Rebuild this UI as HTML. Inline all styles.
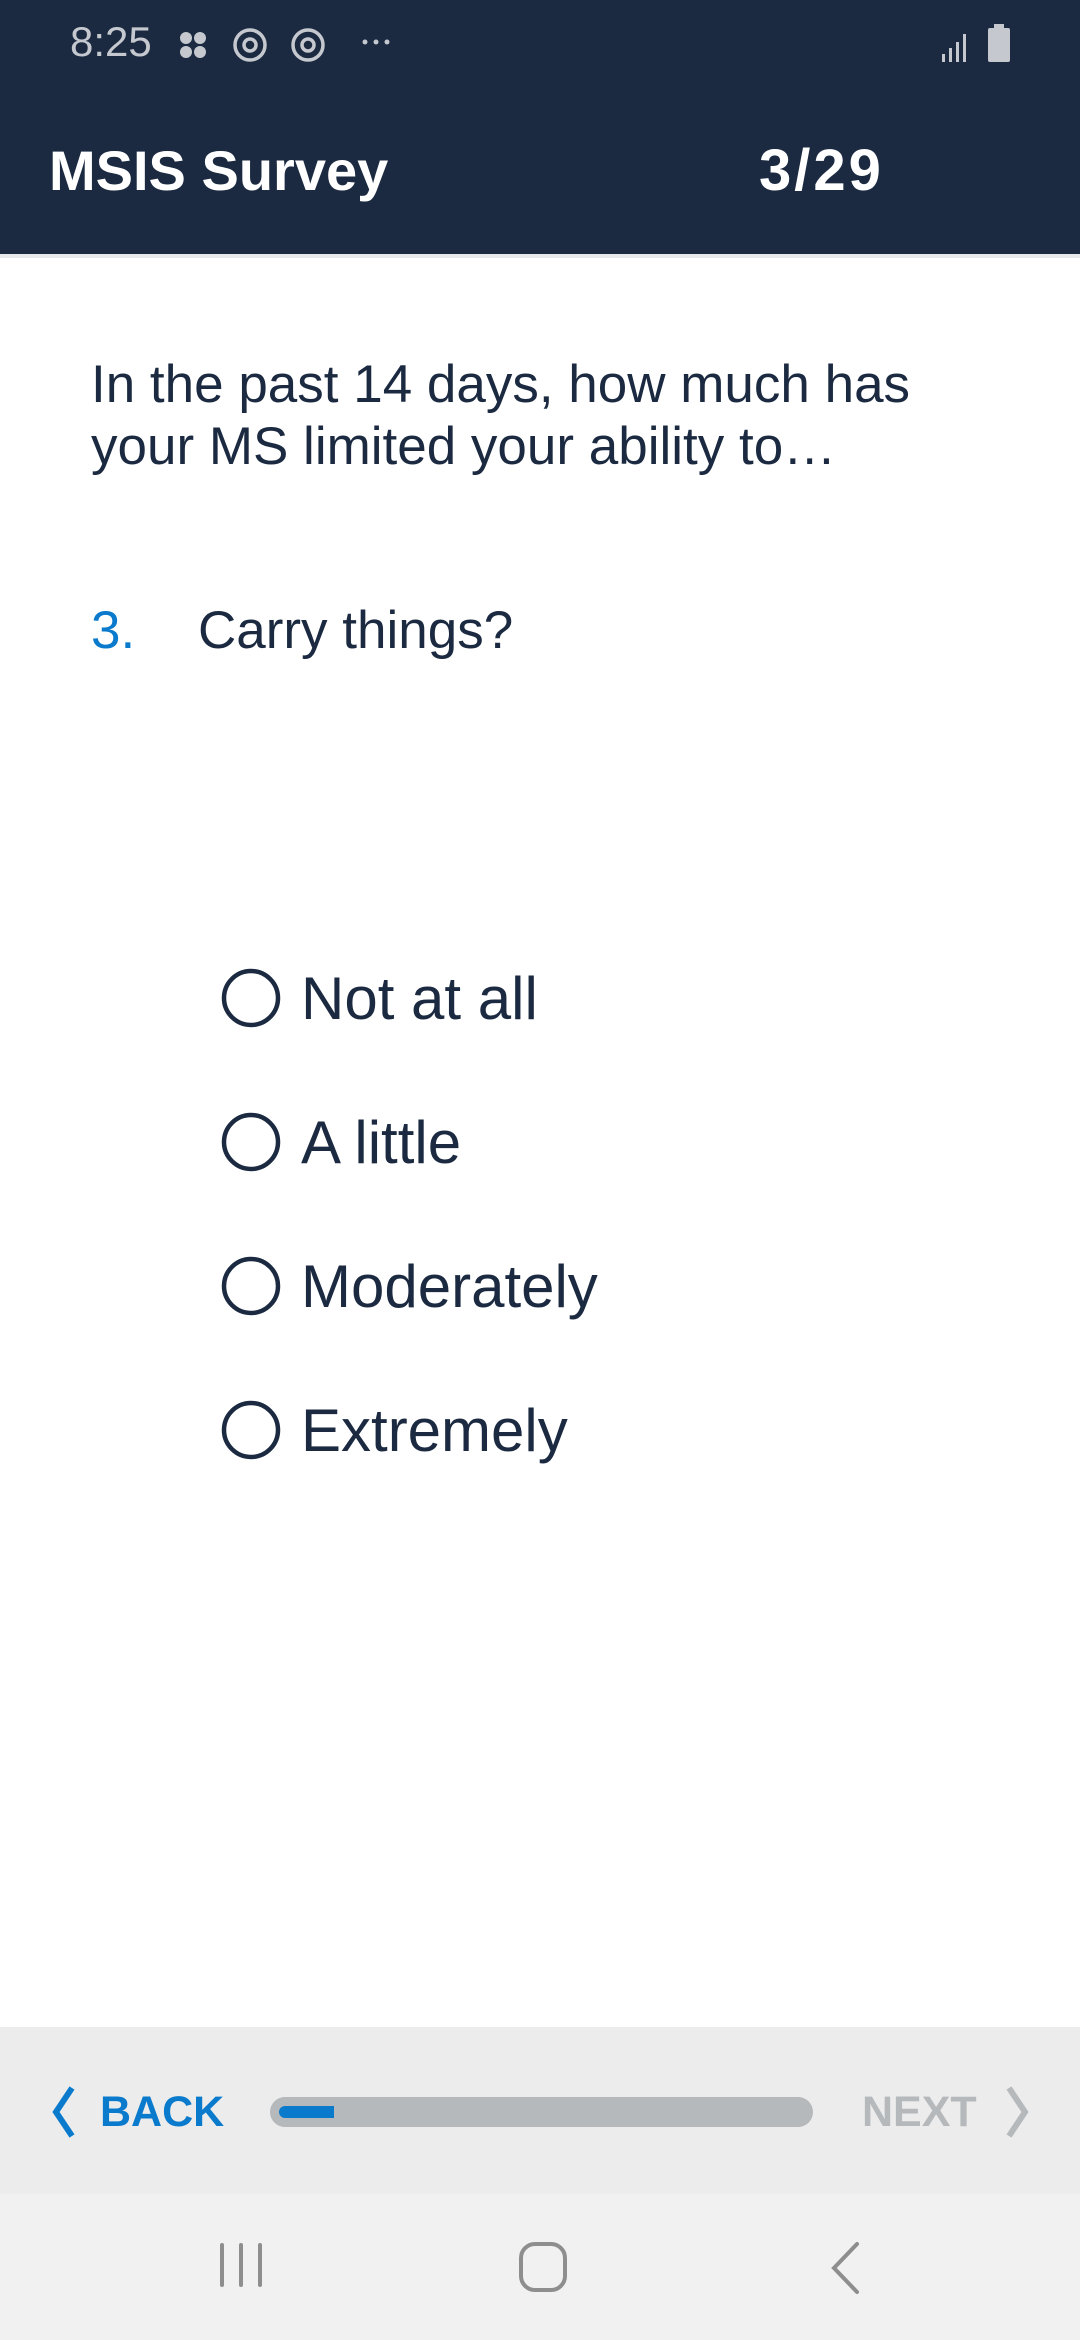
<!DOCTYPE html>
<html><head><meta charset="utf-8"><style>
*{margin:0;padding:0;box-sizing:border-box}
body{width:1080px;height:2340px;position:relative;background:#fff;font-family:"Liberation Sans",sans-serif;overflow:hidden;color:#1b2a41}
.abs{position:absolute}
</style></head><body>
<div class="abs" style="left:0;top:0;width:1080px;height:254px;background:#1b2a41"></div>
<div class="abs" style="left:0;top:254px;width:1080px;height:4px;background:#e6e8ea"></div>
<div class="abs" style="left:70px;top:20px;font-size:42px;color:#c5c9cf;line-height:44px">8:25</div>
<svg class="abs" style="left:176px;top:24px" width="240" height="40" viewBox="0 0 240 40">
<g fill="#c5c9cf"><circle cx="10" cy="14" r="6"/><circle cx="24" cy="14" r="6"/><circle cx="10" cy="28" r="6"/><circle cx="24" cy="28" r="6"/></g>
<g fill="none" stroke="#c5c9cf" stroke-width="3.5"><circle cx="74" cy="21" r="15"/><circle cx="74" cy="21" r="6"/><circle cx="132" cy="21" r="15"/><circle cx="132" cy="21" r="6"/></g>
<g fill="#c5c9cf"><circle cx="189" cy="18" r="2.5"/><circle cx="200" cy="18" r="2.5"/><circle cx="211" cy="18" r="2.5"/></g>
</svg>
<svg class="abs" style="left:938px;top:22px" width="80" height="40" viewBox="0 0 80 40">
<g fill="#c5c9cf"><rect x="4" y="32" width="3" height="8"/><rect x="11" y="26" width="3" height="14"/><rect x="18" y="20" width="3" height="20"/><rect x="25" y="12" width="3" height="28"/>
<rect x="50" y="6" width="22" height="34" rx="2"/><rect x="56" y="2" width="10" height="6"/></g></svg>
<div class="abs" style="left:49px;top:138px;font-size:56px;font-weight:bold;color:#fff;line-height:66px">MSIS Survey</div>
<div class="abs" style="left:759px;top:138px;font-size:58px;font-weight:bold;color:#fff;line-height:66px;letter-spacing:3px">3/29</div>

<div class="abs" style="left:91px;top:354px;font-size:53px;line-height:62px;width:980px;white-space:nowrap">In the past 14 days, how much has<br>your MS limited your ability to…</div>
<div class="abs" style="left:91px;top:600px;font-size:53px;line-height:62px;color:#0a7acc">3.</div>
<div class="abs" style="left:198px;top:600px;font-size:53px;line-height:62px">Carry things?</div>

<svg class="abs" style="left:0;top:940px" width="400" height="560">
<g fill="none" stroke="#1b2a41" stroke-width="4.5"><circle cx="251" cy="58" r="27"/><circle cx="251" cy="202" r="27"/><circle cx="251" cy="346" r="27"/><circle cx="251" cy="490" r="27"/></g></svg>
<div class="abs" style="left:301px;top:963px;font-size:60px;line-height:72px">Not at all</div>
<div class="abs" style="left:301px;top:1107px;font-size:60px;line-height:72px">A little</div>
<div class="abs" style="left:301px;top:1251px;font-size:60px;line-height:72px">Moderately</div>
<div class="abs" style="left:301px;top:1395px;font-size:60px;line-height:72px">Extremely</div>

<div class="abs" style="left:0;top:2027px;width:1080px;height:167px;background:#ececec"></div>
<svg class="abs" style="left:48px;top:2085px" width="30" height="54"><path d="M24 3 L8 27 L24 51" fill="none" stroke="#0a7acc" stroke-width="6"/></svg>
<div class="abs" style="left:100px;top:2085px;font-size:43px;font-weight:bold;color:#0a7acc;line-height:54px">BACK</div>
<div class="abs" style="left:270px;top:2097px;width:543px;height:30px;border-radius:15px;background:#b5b9bc"></div>
<div class="abs" style="left:279px;top:2106px;width:55px;height:12px;border-radius:6px 0 0 6px;background:#0a7acc"></div>
<div class="abs" style="left:862px;top:2085px;font-size:43px;font-weight:bold;color:#b5b9bc;line-height:54px">NEXT</div>
<svg class="abs" style="left:1003px;top:2085px" width="30" height="54"><path d="M6 3 L22 27 L6 51" fill="none" stroke="#b5b9bc" stroke-width="6"/></svg>

<div class="abs" style="left:0;top:2194px;width:1080px;height:146px;background:#f1f1f1"></div>
<svg class="abs" style="left:0;top:2240px" width="1080" height="60">
<g stroke="#8e8e8e" stroke-width="4" fill="none" stroke-linecap="round">
<path d="M222 5 V45 M241 5 V45 M260 5 V45"/>
<rect x="521" y="4" width="44" height="46" rx="14"/>
<path d="M857 4 L834 28 L857 52"/></g></svg>
</body></html>
